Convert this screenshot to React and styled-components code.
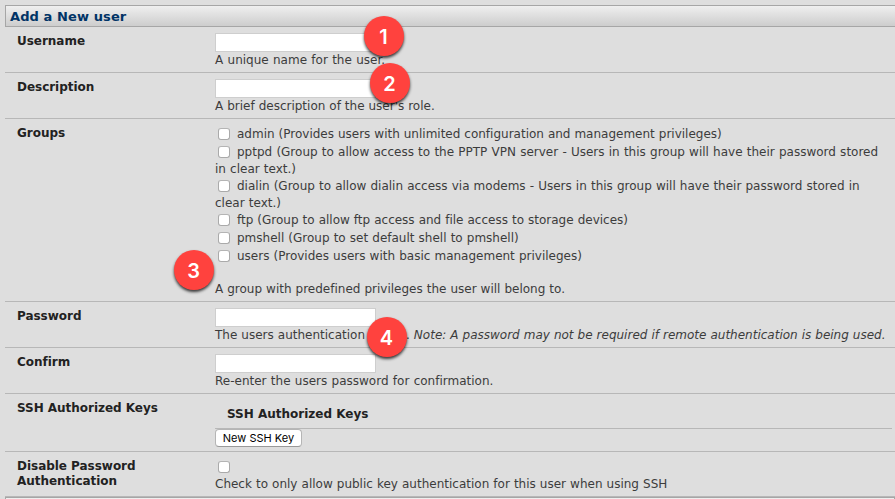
import React from "react";
import styled, { createGlobalStyle } from "styled-components";

const GlobalStyle = createGlobalStyle`
  body { margin: 0; background: #dedede; overflow: hidden; }
  * { box-sizing: border-box; }
`;

const Page = styled.main`
  position: relative;
  width: 895px;
  height: 499px;
  padding: 5px 0 0 5px;
  overflow: hidden;
  background: #dedede;
  color: #3c3c3c;
  font: 12px/16px "DejaVu Sans", Verdana, sans-serif;
  font-variant-ligatures: none;
`;

const Header = styled.h1`
  height: 22px;
  margin: 0;
  padding-left: 4px;
  border: 1px solid #a6a6a6;
  border-right: 0;
  background: linear-gradient(#efefef, #cdcdcd);
  color: #003366;
  font-size: 13px;
  line-height: 21px;
  letter-spacing: 0.1px;
`;

const Row = styled.section`
  display: grid;
  grid-template-columns: 198px 1fr;
  height: ${(p) => p.$height || 46}px;
  padding: 6px 3px 0 12px;
  border-bottom: 1px solid #b7b7b7;
`;

const Label = styled.div`
  padding-top: 1px;
  color: #222;
  font-weight: bold;
  line-height: 15px;
  letter-spacing: -0.03px;
`;

const Field = styled.div`
  min-width: 0;
`;

const TextInput = styled.input`
  display: block;
  width: 161px;
  height: 19px;
  margin: 0;
  padding: 0 2px;
  border: 1px solid #cecece;
  border-radius: 0;
  outline: 0;
  background: #fff;
`;

const TextLine = styled.div`
  height: 16px;
  margin-top: ${(p) => p.$gap || 0}px;
  white-space: nowrap;
  word-spacing: ${(p) => p.$spacing ?? 0.35}px;
`;

const WordGap = styled.span`
  display: inline-block;
  width: 41px;
`;

const Option = styled.label`
  display: flex;
  height: 18px;
  line-height: 18px;
  white-space: nowrap;
  word-spacing: ${(p) => p.$spacing ?? 0.3}px;
`;

const Checkbox = styled.input.attrs({ type: "checkbox" })`
  appearance: none;
  flex: none;
  width: 12px;
  height: 12px;
  margin: 3px 7px 0 3px;
  border: 1px solid #aaa;
  border-top-color: #b4b4b4;
  border-radius: 3px;
  background: #fff;
`;

const KeysHeading = styled.div`
  height: 29px;
  padding: 6px 0 0 12px;
  margin-bottom: 0;
  border-bottom: 1px solid #b7b7b7;
  color: #222;
  font-weight: bold;
`;

const Button = styled.button`
  display: block;
  width: 87px;
  height: 18px;
  padding: 0;
  border: 1px solid #b5b5b5;
  border-bottom-color: #999;
  border-radius: 4px;
  background: #fff;
  color: #000;
  font: 11px/15px Inter, sans-serif;
  white-space: nowrap;
`;

const NextPanel = styled.div`
  height: 22px;
  border: 1px solid #a6a6a6;
  background: linear-gradient(#efefef, #cdcdcd);
`;

const Badge = styled.span`
  position: absolute;
  left: ${(p) => p.$x}px;
  top: ${(p) => p.$y}px;
  width: 40px;
  height: 40px;
  padding-right: 1px;
  border-radius: 50%;
  background: #ff423e;
  box-shadow: 0 2px 3px rgba(0, 0, 0, 0.75);
  color: #fff;
  font: 600 20px/42px Inter, sans-serif;
  text-align: center;
`;

const groups = [
  { text: "admin (Provides users with unlimited configuration and management privileges)", spacing: 0.15 },
  { text: "pptpd (Group to allow access to the PPTP VPN server - Users in this group will have their password stored", rest: "in clear text.)", spacing: 0.4 },
  { text: "dialin (Group to allow dialin access via modems - Users in this group will have their password stored in", rest: "clear text.)" },
  { text: "ftp (Group to allow ftp access and file access to storage devices)", spacing: 0.2 },
  { text: "pmshell (Group to set default shell to pmshell)" },
  { text: "users (Provides users with basic management privileges)" },
];

const badges = [
  { n: 1, x: 364, y: 16 },
  { n: 2, x: 370, y: 63 },
  { n: 3, x: 174, y: 250 },
  { n: 4, x: 367, y: 317 },
];

export default function App() {
  return (
    <>
      <GlobalStyle />
      <Page>
        <Header>Add a New user</Header>
        <Row>
          <Label>Username</Label>
          <Field>
            <TextInput />
            <TextLine $spacing={0.5}>A unique name for the user.</TextLine>
          </Field>
        </Row>
        <Row>
          <Label>Description</Label>
          <Field>
            <TextInput />
            <TextLine $spacing={0.15}>A brief description of the user's role.</TextLine>
          </Field>
        </Row>
        <Row $height={183}>
          <Label>Groups</Label>
          <Field>
            {groups.map((g) => (
              <React.Fragment key={g.text}>
                <Option $spacing={g.spacing}>
                  <Checkbox />
                  {g.text}
                </Option>
                {g.rest && <TextLine>{g.rest}</TextLine>}
              </React.Fragment>
            ))}
            <TextLine $gap={16} $spacing={0.2}>A group with predefined privileges the user will belong to.</TextLine>
          </Field>
        </Row>
        <Row>
          <Label>Password</Label>
          <Field>
            <TextInput type="password" />
            <TextLine $spacing={0.2}>
              The users authentication
              <WordGap />.{" "}
              <em>Note: A password may not be required if remote authentication is being used.</em>
            </TextLine>
          </Field>
        </Row>
        <Row>
          <Label>Confirm</Label>
          <Field>
            <TextInput type="password" />
            <TextLine $spacing={0.5}>Re-enter the users password for confirmation.</TextLine>
          </Field>
        </Row>
        <Row $height={58}>
          <Label>SSH Authorized Keys</Label>
          <Field>
            <KeysHeading>SSH Authorized Keys</KeysHeading>
            <Button>New SSH Key</Button>
          </Field>
        </Row>
        <Row $height={45}>
          <Label>
            Disable Password
            <br />
            Authentication
          </Label>
          <Field>
            <Option>
              <Checkbox />
            </Option>
            <TextLine $spacing={0.25}>Check to only allow public key authentication for this user when using SSH</TextLine>
          </Field>
        </Row>
        <NextPanel />
        {badges.map((b) => (
          <Badge key={b.n} $x={b.x} $y={b.y}>
            {b.n}
          </Badge>
        ))}
      </Page>
    </>
  );
}
